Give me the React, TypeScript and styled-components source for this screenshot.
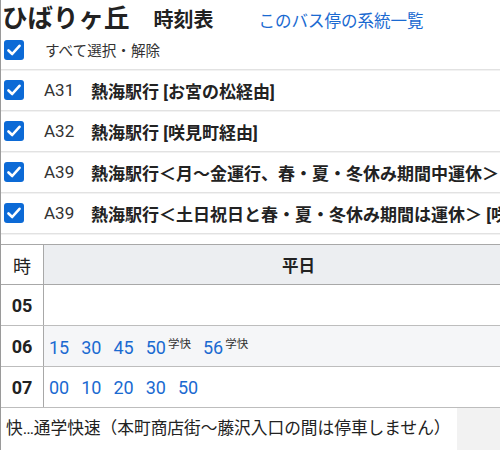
import styled, { createGlobalStyle } from "styled-components";

const GlobalStyle = createGlobalStyle`
  html, body {
    margin: 0;
    padding: 0;
    overflow: hidden;
    background: #fff;
  }
  body {
    font-family: Roboto, "Noto Sans CJK JP", sans-serif;
    color: #222;
  }
`;

const Page = styled.div`
  width: 560px;
  border-left: 1px solid #9a9a9a;
  min-height: 450px;
`;

const Header = styled.div`
  display: flex;
  align-items: baseline;
  height: 27px;
  padding: 3px 0 0 1px;
  white-space: nowrap;
`;

const StopName = styled.h1`
  margin: 0;
  font-size: 25.5px;
  font-weight: 700;
  line-height: 30px;
`;

const PageTitle = styled.h2`
  margin: 0 0 0 24px;
  font-size: 20px;
  font-weight: 700;
  line-height: 30px;
`;

const RouteLink = styled.a`
  margin-left: 45px;
  font-size: 16.5px;
  line-height: 30px;
  color: #1a6ad1;
  text-decoration: none;
`;

interface IRowProps {
  first?: boolean;
}
const CheckRow = styled.label<IRowProps>`
  display: flex;
  align-items: center;
  height: ${(props) => (props.first ? "39px" : "40px")};
  padding-left: 3px;
  border-bottom: 1px solid #e2e2e2;
  box-shadow: 0 1px 0 #f2f2f2;
  white-space: nowrap;
`;

const Box = styled.span`
  flex: none;
  width: 20px;
  height: 20px;
  border-radius: 3px;
  background: #0c6ad6;
  display: flex;
  align-items: center;
  justify-content: center;
`;

const AllLabel = styled.span`
  margin-left: 21px;
  font-size: 14.6px;
  color: #333;
`;

const Code = styled.span`
  flex: none;
  margin-left: 20px;
  width: 47px;
  font-size: 17px;
  color: #333;
`;

const Dest = styled.span`
  flex: none;
  font-size: 17px;
  font-weight: 700;
  color: #222;
`;

const Table = styled.table`
  margin-top: 10px;
  width: 552px;
  border-collapse: collapse;
  border-top: 1px solid #a8a8a8;
  border-bottom: 1px solid #a8a8a8;
`;

const HeadCell = styled.th<{ hour?: boolean }>`
  height: 39px;
  padding: 0;
  font-size: ${(props) => (props.hour ? "18px" : "16.5px")};
  font-weight: ${(props) => (props.hour ? 400 : 700)};
  background: ${(props) => (props.hour ? "#fff" : "#eceef1")};
  border-right: ${(props) => (props.hour ? "1px solid #a8a8a8" : "none")};
  border-bottom: 1px solid #a8a8a8;
  text-align: center;
  width: ${(props) => (props.hour ? "42px" : "auto")};
`;

const Row = styled.tr<{ shaded?: boolean }>`
  background: ${(props) => (props.shaded ? "#f5f6f8" : "#fff")};
`;

const HourCell = styled.td`
  height: 40px;
  padding: 0;
  font-size: 18px;
  font-weight: 700;
  text-align: center;
  background: #fff;
  border-right: 1px solid #a8a8a8;
  border-bottom: 1px solid #bdbdbd;
`;

const TimesCell = styled.td`
  padding: 0 0 0 5px;
  border-bottom: 1px solid #bdbdbd;
  white-space: nowrap;
`;

const Minute = styled.span`
  display: inline-block;
  margin-right: 12px;
  font-size: 18px;
  color: #1a6ad1;
`;

const Mark = styled.sup`
  font-size: 11.5px;
  color: #333;
  margin-left: 2px;
  vertical-align: 6px;
`;

const NoteBar = styled.div`
  background: #f2f2f2;
  height: 44px;
`;

const Note = styled.div`
  display: inline-block;
  background: #fff;
  height: 42px;
  line-height: 42px;
  padding: 0 6px 0 5px;
  font-size: 16.7px;
  color: #222;
`;

const Check = () => (
  <Box>
    <svg width="14" height="12" viewBox="0 0 14 12">
      <path
        d="M1.5 6.5 L5.2 10 L12.5 1.8"
        fill="none"
        stroke="#fff"
        strokeWidth="2.6"
        strokeLinecap="round"
        strokeLinejoin="round"
      />
    </svg>
  </Box>
);

const routes = [
  { code: "A31", dest: "熱海駅行 [お宮の松経由]" },
  { code: "A32", dest: "熱海駅行 [咲見町経由]" },
  { code: "A39", dest: "熱海駅行＜月〜金運行、春・夏・冬休み期間中運休＞" },
  { code: "A39", dest: "熱海駅行＜土日祝日と春・夏・冬休み期間は運休＞ [咲見町経由]" },
];

const timetable = [
  { hour: "05", times: [] as { m: string; mark?: string }[] },
  {
    hour: "06",
    times: [
      { m: "15" },
      { m: "30" },
      { m: "45" },
      { m: "50", mark: "学快" },
      { m: "56", mark: "学快" },
    ],
  },
  {
    hour: "07",
    times: [{ m: "00" }, { m: "10" }, { m: "20" }, { m: "30" }, { m: "50" }],
  },
];

function App() {
  return (
    <>
      <GlobalStyle />
      <Page>
        <Header>
          <StopName>ひばりヶ丘</StopName>
          <PageTitle>時刻表</PageTitle>
          <RouteLink href="#">このバス停の系統一覧</RouteLink>
        </Header>
        <CheckRow first>
          <Check />
          <AllLabel>すべて選択・解除</AllLabel>
        </CheckRow>
        {routes.map((r, i) => (
          <CheckRow key={i}>
            <Check />
            <Code>{r.code}</Code>
            <Dest>{r.dest}</Dest>
          </CheckRow>
        ))}
        <Table>
          <thead>
            <tr>
              <HeadCell hour>時</HeadCell>
              <HeadCell>平日</HeadCell>
            </tr>
          </thead>
          <tbody>
            {timetable.map((row, i) => (
              <Row key={row.hour} shaded={i === 1}>
                <HourCell>{row.hour}</HourCell>
                <TimesCell>
                  {row.times.map((t, j) => (
                    <Minute key={j}>
                      {t.m}
                      {t.mark && <Mark>{t.mark}</Mark>}
                    </Minute>
                  ))}
                </TimesCell>
              </Row>
            ))}
          </tbody>
        </Table>
        <NoteBar>
          <Note>快…通学快速（本町商店街〜藤沢入口の間は停車しません）</Note>
        </NoteBar>
      </Page>
    </>
  );
}

export default App;
